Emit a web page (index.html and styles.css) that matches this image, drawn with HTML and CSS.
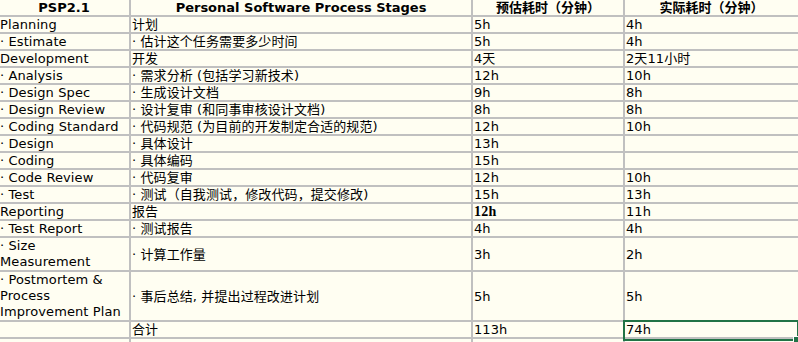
FILE: index.html
```html
<!DOCTYPE html>
<html lang="zh">
<head>
<meta charset="utf-8">
<title>PSP</title>
<link rel="stylesheet" href="styles.css">
</head>
<body>
<table class="psp">
  <thead>
    <tr>
      <th class="c1">PSP2.1</th>
      <th class="c2">Personal Software Process Stages</th>
      <th class="c3">预估耗时（分钟）</th>
      <th class="c4">实际耗时（分钟）</th>
    </tr>
  </thead>
  <tbody>
    <tr><td>Planning</td><td>计划</td><td>5h</td><td>4h</td></tr>
    <tr><td>· Estimate</td><td>· 估计这个任务需要多少时间</td><td>5h</td><td>4h</td></tr>
    <tr><td>Development</td><td>开发</td><td>4天</td><td>2天11小时</td></tr>
    <tr><td>· Analysis</td><td>· 需求分析 (包括学习新技术)</td><td>12h</td><td>10h</td></tr>
    <tr><td>· Design Spec</td><td>· 生成设计文档</td><td>9h</td><td>8h</td></tr>
    <tr><td>· Design Review</td><td>· 设计复审 (和同事审核设计文档)</td><td>8h</td><td>8h</td></tr>
    <tr><td>· Coding Standard</td><td>· 代码规范 (为目前的开发制定合适的规范)</td><td>12h</td><td>10h</td></tr>
    <tr><td>· Design</td><td>· 具体设计</td><td>13h</td><td></td></tr>
    <tr><td>· Coding</td><td>· 具体编码</td><td>15h</td><td></td></tr>
    <tr><td>· Code Review</td><td>· 代码复审</td><td>12h</td><td>10h</td></tr>
    <tr><td>· Test</td><td>· 测试（自我测试，修改代码，提交修改)</td><td>15h</td><td>13h</td></tr>
    <tr><td>Reporting</td><td>报告</td><td><b class="serif">12h</b></td><td>11h</td></tr>
    <tr><td>· Test Report</td><td>· 测试报告</td><td>4h</td><td>4h</td></tr>
    <tr><td class="multi">· Size Measurement</td><td>· 计算工作量</td><td>3h</td><td>2h</td></tr>
    <tr><td class="multi">· Postmortem &amp; Process Improvement Plan</td><td>· 事后总结, 并提出过程改进计划</td><td>5h</td><td>5h</td></tr>
    <tr><td></td><td>合计</td><td>113h</td><td class="sel">74h</td></tr>
    <tr><td></td><td></td><td></td><td></td></tr>
  </tbody>
</table>
</body>
</html>
```

FILE: styles.css
```css
html, body {
  margin: 0;
  padding: 0;
  background: #fffef2;
}

.psp {
  border-collapse: separate;
  border-spacing: 0;
  table-layout: fixed;
  width: 800px;
  font-family: "DejaVu Sans", Verdana, "Noto Sans CJK SC", sans-serif;
  font-size: 13px;
  letter-spacing: 0.1px;
  color: #000;
}

.psp th,
.psp td {
  box-sizing: border-box;
  padding: 0 1px;
  border-right: 2px solid #c0c0c0;
  border-bottom: 2px solid #c0c0c0;
  line-height: 15px;
  height: 17px;
  vertical-align: middle;
  text-align: left;
  white-space: nowrap;
  overflow: visible;
}

.psp td:first-child,
.psp th:first-child {
  padding-left: 0;
}

.psp th {
  font-weight: bold;
  text-align: center;
  font-size: 13px;
  letter-spacing: 0;
}

.c1 { width: 131px; }
.c2 { width: 342px; }
.c3 { width: 152px; }
.c4 { width: 175px; }

.psp td.multi {
  white-space: normal;
  line-height: 16px;
}

.serif {
  font-family: "Liberation Serif", "Times New Roman", serif;
  font-weight: bold;
  font-size: 14px;
  letter-spacing: 0.3px;
}

.psp td.sel {
  position: relative;
}

.psp td.sel::after {
  content: "";
  position: absolute;
  left: -2px;
  top: -2px;
  width: 172px;
  height: 17px;
  border: 2px solid #217346;
}

.psp td.sel::before {
  content: "";
  position: absolute;
  left: 168px;
  top: 14px;
  width: 5px;
  height: 5px;
  background: #217346;
  border: 1px solid #fff;
  z-index: 1;
}
```
